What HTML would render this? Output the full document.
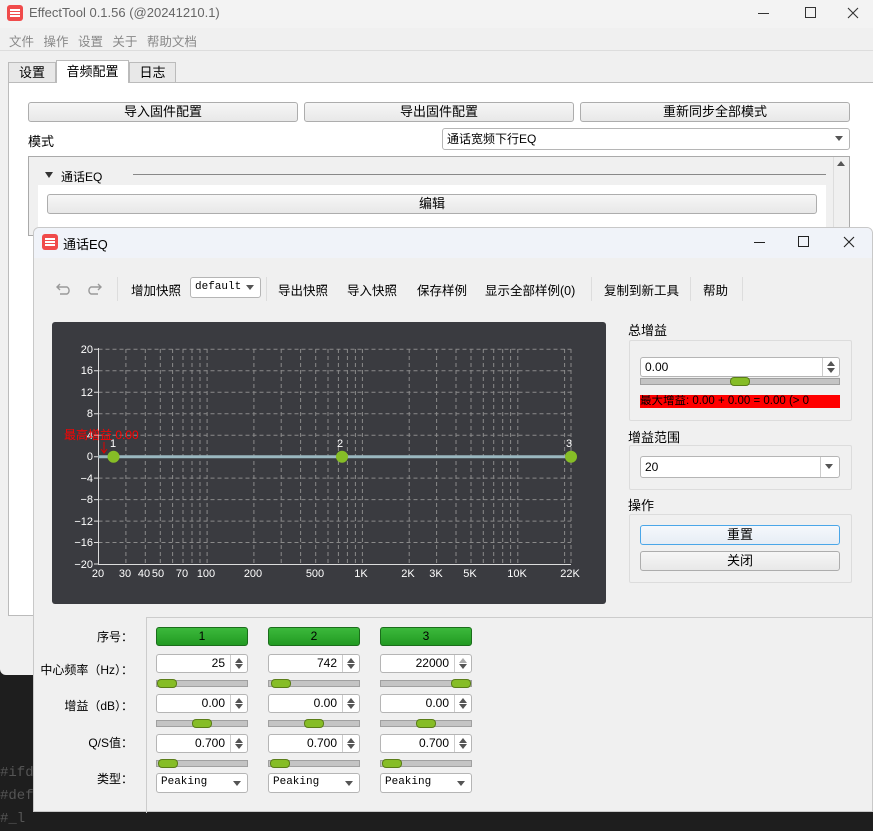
<!DOCTYPE html>
<html><head><meta charset="utf-8"><style>
*{box-sizing:border-box;margin:0;padding:0}
body{width:873px;height:812px;overflow:hidden;position:relative;background:#1e1e1e;font-family:"Liberation Sans","Noto Sans CJK SC",sans-serif;font-size:12px;color:#000}
.a{position:absolute}
.btn{position:absolute;border:1px solid #adadad;border-radius:3px;background:linear-gradient(#f6f6f6,#e8e8e8);text-align:center;font-size:12px;line-height:18px}
.spin{position:absolute;background:#fff;border:1px solid #b5b5b5;border-radius:3px;font-size:12px;line-height:17px;text-align:right;padding-right:22px}
.spin:after{content:"";position:absolute;right:0;top:0;bottom:0;width:16px;border-left:1px solid #ccc}
.spin i{position:absolute;right:4px;width:0;height:0;border-left:4px solid transparent;border-right:4px solid transparent}
.up{top:3px;border-bottom:5px solid #555}
.dn{bottom:3px;border-top:5px solid #555}
.sl{position:absolute;height:7px;background:#c4c4c4;border:1px solid #a0a0a0}
.sl b{position:absolute;top:-2px;width:20px;height:9px;background:#86bd26;border:1px solid #5a7d18;border-radius:4px}
.combo{position:absolute;background:#fff;border:1px solid #b5b5b5;border-radius:3px;font-size:11px;line-height:17px;padding-left:4px;font-family:"Liberation Mono",monospace}
.combo:after{content:"";position:absolute;right:6px;top:7px;border-left:4px solid transparent;border-right:4px solid transparent;border-top:5px solid #555}
.green{position:absolute;height:19px;background:linear-gradient(#3cb93c,#229a22);border:1px solid #1b6d1b;border-radius:3px;text-align:center;line-height:17px;font-size:12px}
.lbl{position:absolute;right:740px;font-size:12px;text-align:right;white-space:nowrap}
.tb{position:absolute;top:280px;font-size:12.5px;white-space:nowrap}
.sep{position:absolute;top:277px;width:1px;height:24px;background:#ddd}
</style></head><body>
<div class="a" style="left:0;top:762px;color:#555;font-family:'Liberation Mono',monospace;font-size:14px;line-height:23px">#ifd<br>#def<br>#_l</div>
<!-- main window -->
<div class="a" style="left:0;top:0;width:873px;height:675px;background:#f0f0f0;border-radius:0 0 0 6px">
 <div class="a" style="left:0;top:0;width:873px;height:28px;background:#f3f3f3"></div>
 <div class="a" style="left:7px;top:5px;width:16px;height:16px;background:#f04b4b;border-radius:3px"></div>
 <div class="a" style="left:10px;top:9px;width:10px;height:1.5px;background:#fff;box-shadow:0 3px #fff,0 6px #fff"></div>
 <div class="a" style="left:29px;top:5px;font-size:13px;color:#666">EffectTool 0.1.56  (@20241210.1)</div>
 <div class="a" style="left:758px;top:13px;width:11px;height:1px;background:#333"></div>
 <div class="a" style="left:805px;top:7px;width:11px;height:11px;border:1px solid #333"></div>
 <svg class="a" style="left:847px;top:7px" width="12" height="12"><path d="M1 1L11 11M11 1L1 11" stroke="#333" stroke-width="1.1"/></svg>
 <div class="a" style="left:9px;top:31px;font-size:12.5px;color:#888;word-spacing:6px">文件 操作 设置 关于 帮助文档</div>
 <div class="a" style="left:0;top:50px;width:873px;height:1px;background:#ddd"></div>
 <div class="a" style="left:8px;top:62px;width:48px;height:21px;border:1px solid #bbb;background:#e8e8e8;text-align:center;line-height:20px;font-size:13px">设置</div>
 <div class="a" style="left:56px;top:60px;width:73px;height:23px;border:1px solid #bbb;border-bottom:none;background:#fff;text-align:center;line-height:22px;font-size:13px;z-index:2">音频配置</div>
 <div class="a" style="left:129px;top:62px;width:47px;height:21px;border:1px solid #bbb;background:#e8e8e8;text-align:center;line-height:20px;font-size:13px">日志</div>
 <div class="a" style="left:8px;top:82px;width:866px;height:534px;border:1px solid #bbb;background:#fff"></div>
 <div class="btn" style="left:28px;top:102px;width:270px;height:20px;font-size:13px">导入固件配置</div>
 <div class="btn" style="left:304px;top:102px;width:270px;height:20px;font-size:13px">导出固件配置</div>
 <div class="btn" style="left:580px;top:102px;width:270px;height:20px;font-size:13px">重新同步全部模式</div>
 <div class="a" style="left:28px;top:131px;font-size:13px">模式</div>
 <div class="combo" style="left:442px;top:128px;width:408px;height:22px;font-family:'Liberation Sans','Noto Sans CJK SC',sans-serif;font-size:12px;line-height:20px">通话宽频下行EQ</div>
 <div class="a" style="left:28px;top:156px;width:822px;height:80px;border:1px solid #aaa;background:#f0f0f0"></div>
 <div class="a" style="left:833px;top:157px;width:16px;height:78px;background:#f0f0f0;border-left:1px solid #ddd"></div>
 <div class="a" style="left:837px;top:161px;border-left:4px solid transparent;border-right:4px solid transparent;border-bottom:5px solid #555"></div>
 <div class="a" style="left:45px;top:172px;border-left:4px solid transparent;border-right:4px solid transparent;border-top:6px solid #333"></div>
 <div class="a" style="left:61px;top:168px;font-size:12px">通话EQ</div>
 <div class="a" style="left:133px;top:174px;width:693px;height:1px;background:#888"></div>
 <div class="a" style="left:38px;top:185px;width:788px;height:50px;background:#fff"></div>
 <div class="btn" style="left:47px;top:194px;width:770px;height:20px;font-size:13px">编辑</div>
</div>
<!-- dialog -->
<div class="a" style="left:33px;top:227px;width:840px;height:585px;background:#f0f0f0;border:1px solid #c8c8c8;border-radius:6px 6px 0 0;overflow:hidden">
 <div class="a" style="left:0;top:0;width:840px;height:30px;background:#f0f3f9"></div>
 <div class="a" style="left:8px;top:6px;width:16px;height:16px;background:#f04b4b;border-radius:3px"></div>
 <div class="a" style="left:11px;top:10px;width:10px;height:1.5px;background:#fff;box-shadow:0 3px #fff,0 6px #fff"></div>
 <div class="a" style="left:29px;top:6px;font-size:13px">通话EQ</div>
 <div class="a" style="left:720px;top:14px;width:11px;height:1px;background:#222"></div>
 <div class="a" style="left:764px;top:8px;width:11px;height:11px;border:1.3px solid #222"></div>
 <svg class="a" style="left:809px;top:8px" width="12" height="12"><path d="M1 1L11 11M11 1L1 11" stroke="#222" stroke-width="1.1"/></svg>
</div>
<svg class="a" style="left:56px;top:281px" width="50" height="14"><path d="M4 3L1 6L4 9M1 6H11a4 4 0 0 1 0 7H4" fill="none" stroke="#999" stroke-width="1.4"/><path d="M42 3L45 6L42 9M45 6H35a4 4 0 0 0 0 7H42" fill="none" stroke="#999" stroke-width="1.4"/></svg>
<div class="sep" style="left:117px"></div>
<div class="tb" style="left:131px">增加快照</div>
<div class="combo" style="left:190px;top:277px;width:71px;height:21px;line-height:19px">default</div>
<div class="sep" style="left:266px"></div>
<div class="tb" style="left:278px">导出快照</div>
<div class="tb" style="left:347px">导入快照</div>
<div class="tb" style="left:417px">保存样例</div>
<div class="tb" style="left:485px">显示全部样例(0)</div>
<div class="sep" style="left:591px"></div>
<div class="tb" style="left:604px">复制到新工具</div>
<div class="sep" style="left:690px"></div>
<div class="tb" style="left:703px">帮助</div>
<div class="sep" style="left:742px"></div>
<!-- chart -->
<svg class="a" style="left:52px;top:322px" width="554" height="282" viewBox="52 322 554 282" font-family="Liberation Sans" font-size="11" fill="#fff">
<rect x="52" y="322" width="554" height="282" rx="3" fill="#3a3b40"/>
<g stroke="#8a8a8a" stroke-dasharray="4,3" stroke-width="1">
<path d="M98.5 349.3H571M98.5 370.8H571M98.5 392.2H571M98.5 413.7H571M98.5 435.2H571M98.5 478.1H571M98.5 499.6H571M98.5 521.1H571M98.5 542.5H571"/>
<path d="M125.9 349V564M145.3 349V564M160.3 349V564M172.6 349V564M183 349V564M192 349V564M200 349V564M207.1 349V564M253.9 349V564M281.2 349V564M300.6 349V564M315.7 349V564M328 349V564M338.4 349V564M347.4 349V564M355.4 349V564M362.4 349V564M409.2 349V564M436.6 349V564M456 349V564M471 349V564M483.3 349V564M493.7 349V564M502.7 349V564M510.6 349V564M517.8 349V564M564.6 349V564M571 349V564"/>
</g>
<path d="M98.5 348V564.5H571" stroke="#ddd" fill="none"/>
<path d="M94 349.3h4M94 370.8h4M94 392.2h4M94 413.7h4M94 435.2h4M94 456.7h4M94 478.1h4M94 499.6h4M94 521.1h4M94 542.5h4M94 564h4" stroke="#ddd"/>
<g text-anchor="end">
<text x="93" y="353">20</text><text x="93" y="374">16</text><text x="93" y="396">12</text><text x="93" y="417">8</text><text x="93" y="439">4</text><text x="93" y="460">0</text><text x="93" y="482">−4</text><text x="93" y="503">−8</text><text x="93" y="525">−12</text><text x="93" y="546">−16</text><text x="93" y="568">−20</text>
</g>
<g text-anchor="middle">
<text x="98" y="577">20</text><text x="125" y="577">30</text><text x="144" y="577">40</text><text x="158" y="577">50</text><text x="182" y="577">70</text><text x="206" y="577">100</text><text x="253" y="577">200</text><text x="315" y="577">500</text><text x="361" y="577">1K</text><text x="408" y="577">2K</text><text x="436" y="577">3K</text><text x="470" y="577">5K</text><text x="517" y="577">10K</text><text x="570" y="577">22K</text>
</g>
<path d="M98.5 456.7H571" stroke="#9ab8c0" stroke-width="3"/>
<circle cx="113.5" cy="456.7" r="6" fill="#86bd26"/><circle cx="342" cy="456.7" r="6" fill="#86bd26"/><circle cx="571" cy="456.7" r="6" fill="#86bd26"/>
<text x="113" y="447" text-anchor="middle">1</text><text x="340" y="447" text-anchor="middle">2</text><text x="569" y="447" text-anchor="middle">3</text>
<text x="64" y="439" fill="#f00" font-size="12" font-family="Liberation Sans,Noto Sans CJK SC">最高增益 0.00</text>
<path d="M104 442v11M101 449l3 4 3-4" stroke="#d00" fill="none"/>
</svg>
<!-- right panel -->
<div class="a" style="left:628px;top:320px;font-size:13px">总增益</div>
<div class="a" style="left:629px;top:340px;width:223px;height:81px;border:1px solid #dcdcdc;border-radius:2px"></div>
<div class="spin" style="left:640px;top:357px;width:200px;height:20px;text-align:left;padding-left:4px;line-height:18px">0.00<i class="up"></i><i class="dn"></i></div>
<div class="sl" style="left:640px;top:378px;width:200px"><b style="left:89px"></b></div>
<div class="a" style="left:640px;top:395px;width:200px;height:13px;background:#f00;font-size:11.5px;line-height:13px;white-space:nowrap;overflow:hidden">最大增益: 0.00 + 0.00 = 0.00 (&gt; 0</div>
<div class="a" style="left:628px;top:427px;font-size:13px">增益范围</div>
<div class="a" style="left:629px;top:445px;width:223px;height:45px;border:1px solid #dcdcdc;border-radius:2px"></div>
<div class="combo" style="left:640px;top:456px;width:200px;height:22px;line-height:20px;font-family:'Liberation Sans',sans-serif;font-size:12px">20<span class="a" style="right:18px;top:0;width:1px;height:20px;background:#ccc"></span></div>
<div class="a" style="left:628px;top:495px;font-size:13px">操作</div>
<div class="a" style="left:629px;top:514px;width:223px;height:69px;border:1px solid #dcdcdc;border-radius:2px"></div>
<div class="btn" style="left:640px;top:525px;width:200px;height:20px;border-color:#4aa6e8;background:linear-gradient(#f5f8fc,#e6edf5);font-size:13px">重置</div>
<div class="btn" style="left:640px;top:551px;width:200px;height:20px;font-size:13px">关闭</div>
<!-- bottom table -->
<div class="a" style="left:146px;top:617px;width:728px;height:196px;border:1px solid #ccc;border-right:none;border-bottom:none"></div>
<div class="lbl" style="top:628px">序号：</div>
<div class="lbl" style="top:661px">中心频率（Hz）：</div>
<div class="lbl" style="top:697px">增益（dB）：</div>
<div class="lbl" style="top:734px">Q/S值：</div>
<div class="lbl" style="top:770px">类型：</div>
<div class="green" style="left:156px;top:627px;width:92px">1</div>
<div class="green" style="left:268px;top:627px;width:92px">2</div>
<div class="green" style="left:380px;top:627px;width:92px">3</div>
<div class="spin" style="left:156px;top:654px;width:92px;height:19px">25<i class="up"></i><i class="dn"></i></div>
<div class="spin" style="left:268px;top:654px;width:92px;height:19px">742<i class="up"></i><i class="dn"></i></div>
<div class="spin" style="left:380px;top:654px;width:92px;height:19px">22000<i class="up" style="border-bottom-color:#aaa"></i><i class="dn"></i></div>
<div class="sl" style="left:156px;top:680px;width:92px"><b style="left:0"></b></div>
<div class="sl" style="left:268px;top:680px;width:92px"><b style="left:2px"></b></div>
<div class="sl" style="left:380px;top:680px;width:92px"><b style="left:70px"></b></div>
<div class="spin" style="left:156px;top:694px;width:92px;height:19px">0.00<i class="up"></i><i class="dn"></i></div>
<div class="spin" style="left:268px;top:694px;width:92px;height:19px">0.00<i class="up"></i><i class="dn"></i></div>
<div class="spin" style="left:380px;top:694px;width:92px;height:19px">0.00<i class="up"></i><i class="dn"></i></div>
<div class="sl" style="left:156px;top:720px;width:92px"><b style="left:35px"></b></div>
<div class="sl" style="left:268px;top:720px;width:92px"><b style="left:35px"></b></div>
<div class="sl" style="left:380px;top:720px;width:92px"><b style="left:35px"></b></div>
<div class="spin" style="left:156px;top:734px;width:92px;height:19px">0.700<i class="up"></i><i class="dn"></i></div>
<div class="spin" style="left:268px;top:734px;width:92px;height:19px">0.700<i class="up"></i><i class="dn"></i></div>
<div class="spin" style="left:380px;top:734px;width:92px;height:19px">0.700<i class="up"></i><i class="dn"></i></div>
<div class="sl" style="left:156px;top:760px;width:92px"><b style="left:1px"></b></div>
<div class="sl" style="left:268px;top:760px;width:92px"><b style="left:1px"></b></div>
<div class="sl" style="left:380px;top:760px;width:92px"><b style="left:1px"></b></div>
<div class="combo" style="left:156px;top:773px;width:92px;height:20px">Peaking</div>
<div class="combo" style="left:268px;top:773px;width:92px;height:20px">Peaking</div>
<div class="combo" style="left:380px;top:773px;width:92px;height:20px">Peaking</div>
</body></html>
